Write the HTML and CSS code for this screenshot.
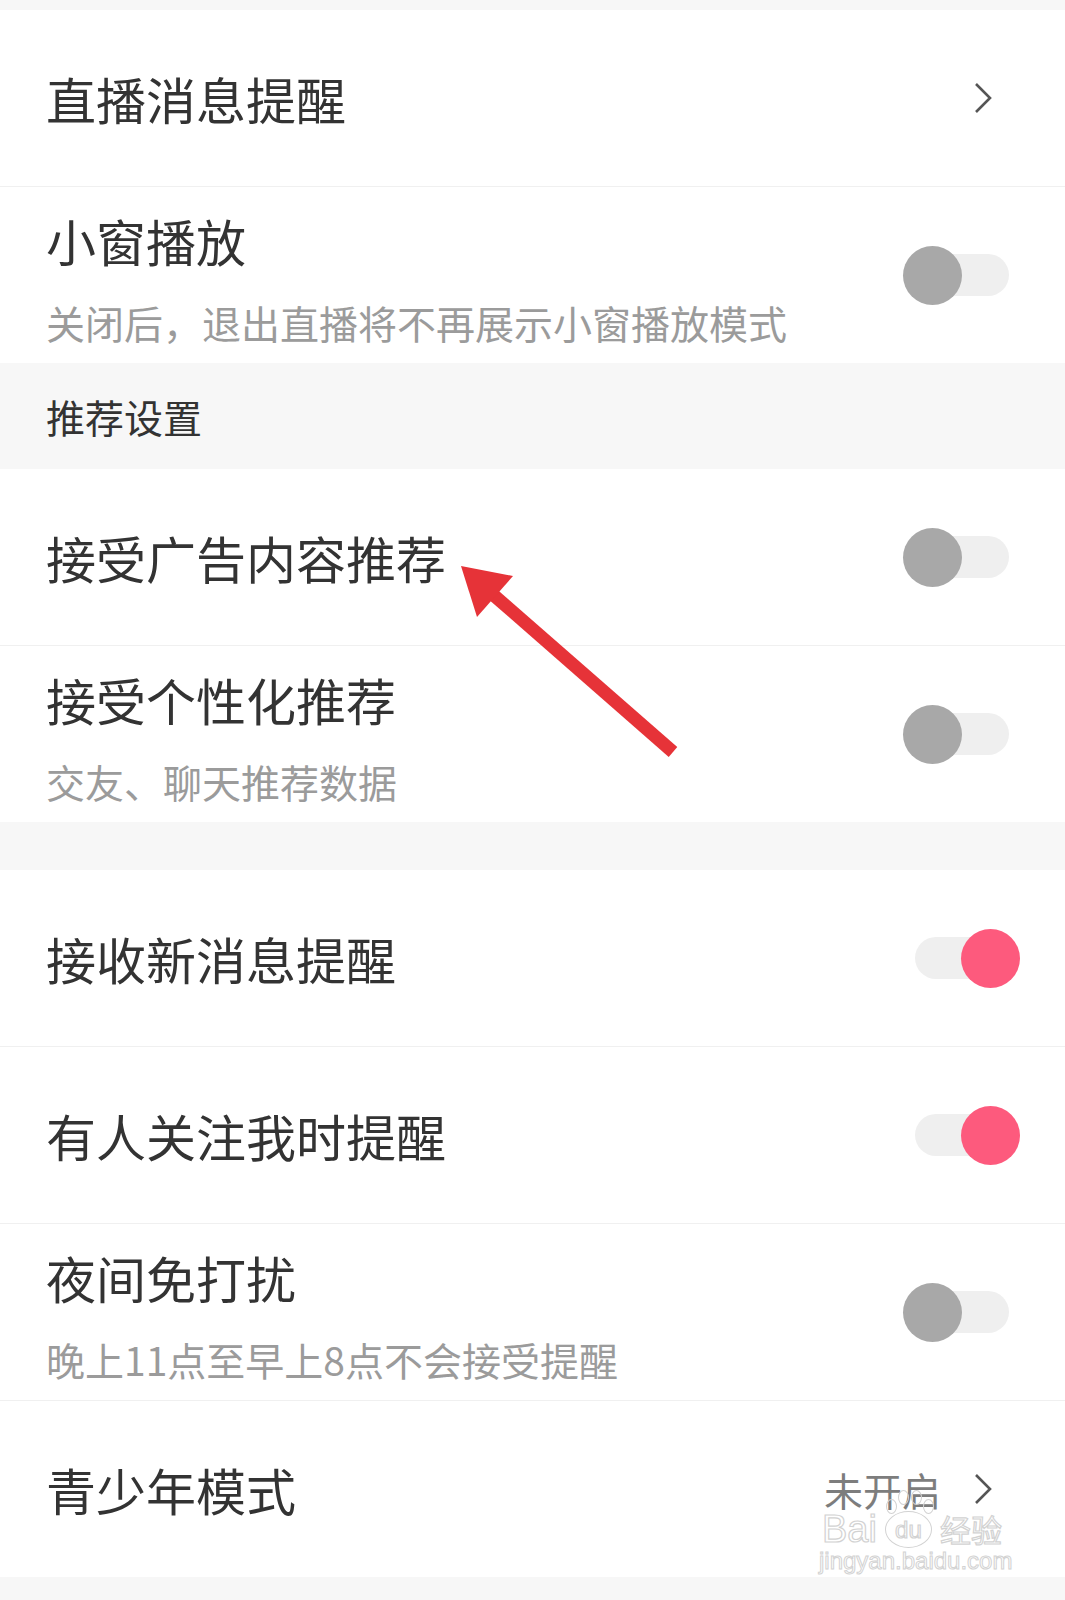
FILE: index.html
```html
<!DOCTYPE html>
<html lang="zh-CN">
<head>
    <meta charset="UTF-8">
    <meta name="viewport" content="width=device-width, initial-scale=1.0">
    <title>设置</title>
    <link rel="stylesheet" href="styles.css">
</head>
<body>

<div class="page">
    <div class="band top"></div>

    <div class="row line">
        <span class="title">直播消息提醒</span>
        <svg class="chevron" viewBox="0 0 20 32"><polyline points="3,2 17,16 3,30"/></svg>
    </div>

    <div class="row tall">
        <div class="text">
            <div class="title">小窗播放</div>
            <div class="sub">关闭后，退出直播将不再展示小窗播放模式</div>
        </div>
        <span class="switch"><span class="knob"></span></span>
    </div>

    <div class="section">推荐设置</div>

    <div class="row line">
        <span class="title">接受广告内容推荐</span>
        <span class="switch"><span class="knob"></span></span>
    </div>

    <div class="row tall">
        <div class="text">
            <div class="title">接受个性化推荐</div>
            <div class="sub">交友、聊天推荐数据</div>
        </div>
        <span class="switch"><span class="knob"></span></span>
    </div>

    <div class="band gap"></div>

    <div class="row line">
        <span class="title">接收新消息提醒</span>
        <span class="switch on"><span class="knob"></span></span>
    </div>

    <div class="row line">
        <span class="title">有人关注我时提醒</span>
        <span class="switch on"><span class="knob"></span></span>
    </div>

    <div class="row tall line">
        <div class="text">
            <div class="title">夜间免打扰</div>
            <div class="sub">晚上11点至早上8点不会接受提醒</div>
        </div>
        <span class="switch"><span class="knob"></span></span>
    </div>

    <div class="row">
        <span class="title">青少年模式</span>
        <span class="value">
            <span class="state">未开启</span>
            <svg class="chevron" viewBox="0 0 20 32"><polyline points="3,2 17,16 3,30"/></svg>
        </span>
    </div>

    <div class="band bottom"></div>

    <!-- annotation arrow drawn over the screenshot -->
    <svg class="arrow" viewBox="0 0 1065 1600">
        <line x1="490" y1="592" x2="673" y2="752"/>
        <polygon points="461,566 513,576 477,617"/>
    </svg>

    <div class="watermark">
        <div class="wm-logo">
            <span>Bai</span>
            <span class="paw">
                <span class="toe t1"></span>
                <span class="toe t2"></span>
                <span class="toe t3"></span>
                <span class="toe t4"></span>
                du
            </span>
            <span class="wm-cn">经验</span>
        </div>
        <div class="wm-url">jingyan.baidu.com</div>
    </div>
</div>

</body>
</html>
```

FILE: styles.css
```css
body {
    margin: 0;
    background-color: #fff;
    font-family: "Noto Sans CJK SC", "Noto Sans", sans-serif;
    color: #333;
}

.page {
    position: relative;
    width: 1065px;
    height: 1600px;
    overflow: hidden;
}

.band {
    background-color: #f7f7f7;
}

.band.top {
    height: 10px;
}

.band.gap {
    height: 48px;
}

.band.bottom {
    height: 30px;
}

.row {
    display: flex;
    justify-content: space-between;
    align-items: center;
    height: 176px;
    padding-left: 46px;
    box-sizing: border-box;
    background-color: #fff;
}

.row.line {
    height: 177px;
    border-bottom: 1px solid #f0f0f0;
}

.title {
    font-size: 50px;
    line-height: 60px;
    color: #333;
}

.row.tall .text {
    align-self: stretch;
    padding-top: 23px;
}

.sub {
    margin-top: 27px;
    font-size: 39px;
    line-height: 50px;
    color: #9b9b9b;
}

.section {
    height: 106px;
    padding-left: 46px;
    font-size: 39px;
    line-height: 106px;
    color: #333;
    background-color: #f7f7f7;
}

.chevron {
    width: 20px;
    height: 32px;
    margin-right: 72px;
    fill: none;
    stroke: #555;
    stroke-width: 2.6;
}

.value {
    display: flex;
    align-items: center;
    gap: 32px;
}

.state {
    font-size: 39px;
    line-height: 50px;
    color: #7d7d7d;
}

.switch {
    position: relative;
    width: 94px;
    height: 42px;
    margin-right: 56px;
    border-radius: 21px;
    background-color: #efefef;
}

.knob {
    position: absolute;
    top: -8.5px;
    left: -12px;
    width: 59px;
    height: 59px;
    border-radius: 50%;
    background-color: #a8a8a8;
}

.switch.on .knob {
    left: auto;
    right: -11px;
    background-color: #fd5a7d;
}

.arrow {
    position: absolute;
    top: 0;
    left: 0;
    width: 1065px;
    height: 1600px;
    pointer-events: none;
}

.arrow line {
    stroke: #e63338;
    stroke-width: 13;
}

.arrow polygon {
    fill: #e63338;
}

/* baidu jingyan watermark */
.watermark {
    position: absolute;
    left: 819px;
    top: 1507px;
    font-family: "Liberation Sans", sans-serif;
    color: rgba(255, 255, 255, 0.8);
    -webkit-text-stroke: 1.2px #d2d2d2;
}

.wm-logo {
    display: flex;
    align-items: center;
    padding-left: 3px;
    font-size: 38px;
    line-height: 44px;
}

.paw {
    position: relative;
    width: 45px;
    height: 35px;
    margin-left: 8px;
    border: 1.5px solid #d2d2d2;
    border-radius: 50%;
    font-size: 24px;
    line-height: 35px;
    text-align: center;
}

.toe {
    position: absolute;
    width: 9px;
    height: 13px;
    border: 1.5px solid #d2d2d2;
    border-radius: 50%;
}

.t1 { left: 0; top: -13px; }
.t2 { left: 12px; top: -22px; }
.t3 { left: 25px; top: -22px; }
.t4 { left: 37px; top: -13px; }

.wm-cn {
    margin-left: 8px;
    font-family: "Noto Sans CJK SC", sans-serif;
    font-size: 31px;
}

.wm-url {
    margin-top: -4px;
    font-size: 24px;
    line-height: 28px;
    -webkit-text-stroke: 1px #d2d2d2;
}
```
